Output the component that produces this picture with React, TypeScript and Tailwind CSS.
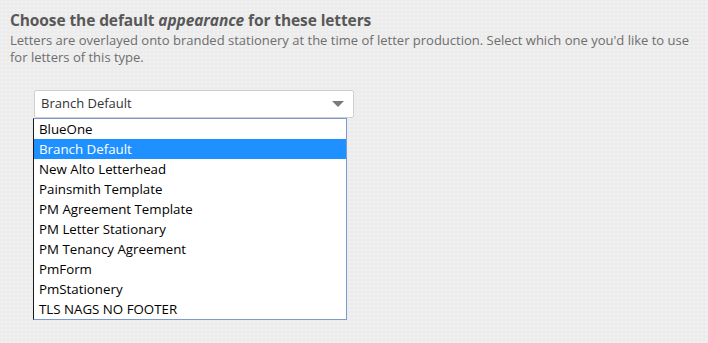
import React from 'react';

const options = [
    'BlueOne',
    'Branch Default',
    'New Alto Letterhead',
    'Painsmith Template',
    'PM Agreement Template',
    'PM Letter Stationary',
    'PM Tenancy Agreement',
    'PmForm',
    'PmStationery',
    'TLS NAGS NO FOOTER',
];

const App: React.FC = () => {
    const selected = 'Branch Default';

    return (
        <div className="w-[708px] h-[343px] overflow-hidden bg-[#ececec] bg-[radial-gradient(#f6f6f6_0.6px,transparent_0.8px)] bg-[length:4px_4px] font-['Open_Sans',sans-serif]">
            <div className="pl-[10px] pt-[10px]">
                {/* Header */}
                <h2 className="text-[15.5px] leading-[20px] font-bold text-[#585858] tracking-[-0.1px]">
                    Choose the default <em>appearance</em> for these letters
                </h2>
                <p className="mt-[2px] w-[690px] text-[13px] leading-[17px] text-[#6e6e6e]">
                    Letters are overlayed onto branded stationery at the time of letter production. Select which one you'd like to use for letters of this type.
                </p>

                {/* Select */}
                <div className="mt-[24px] ml-[24px] w-[320px]">
                    <div className="flex items-center justify-between h-[28px] pl-[6px] pr-[9px] bg-white border border-[#cfcfcf] rounded-[2px] text-[13px] text-[#333]">
                        <span>{selected}</span>
                        <svg width="12" height="6" viewBox="0 0 12 6">
                            <path d="M0 0 L12 0 L6 6 Z" fill="#7a7a7a" />
                        </svg>
                    </div>

                    {/* Open list */}
                    <ul className="-ml-px w-[314px] bg-white border border-[#7b9bd1] border-l-[#1a1a1a]">
                        {options.map((opt) => (
                            <li
                                key={opt}
                                className={
                                    opt === selected
                                        ? 'h-[20px] leading-[20px] pl-[5px] text-[13.3px] bg-[#1e90ff] text-white'
                                        : 'h-[20px] leading-[20px] pl-[5px] text-[13.3px] text-black'
                                }
                            >
                                {opt}
                            </li>
                        ))}
                    </ul>
                </div>
            </div>
        </div>
    );
};

export default App;
